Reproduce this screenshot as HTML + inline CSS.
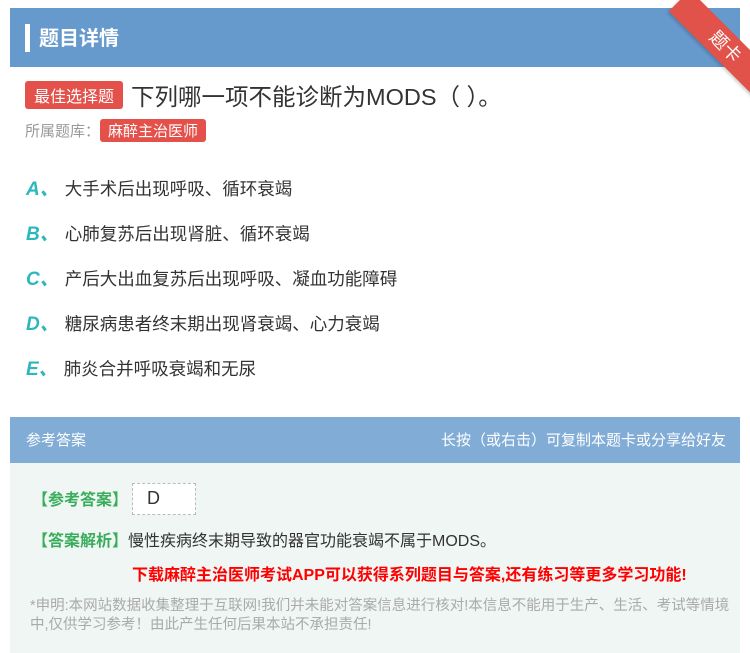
<!DOCTYPE html>
<html><head><meta charset="utf-8"><style>
*{margin:0;padding:0;box-sizing:border-box}
body{width:750px;height:653px;background:#fff;font-family:"Liberation Sans","Noto Sans CJK SC",sans-serif;position:relative;overflow:hidden;color:#333}
.hd{position:absolute;left:10px;top:8px;width:730px;height:59px;background:#6699cc}
.hd .bar{position:absolute;left:15px;top:16px;width:5px;height:28px;background:#fff}
.hd .t{position:absolute;left:29px;top:14px;color:#fff;font-size:20px;font-weight:bold}
.rib{position:absolute;width:130px;height:30px;background:#e0524a;transform:rotate(45deg);transform-origin:0 0;left:690px;top:-10px;color:#fff;font-size:18px;text-align:center;line-height:30px;box-shadow:0 2px 3px rgba(0,0,0,.2)}
.tag{display:inline-block;background:#e4504a;color:#fff;border-radius:3px}
.q{position:absolute;left:25px;top:78px;font-size:23.5px;color:#333;white-space:nowrap}
.q .tag{font-size:16px;padding:2px 9px;margin-right:8px;vertical-align:3px}
.lib{position:absolute;left:25px;top:119px;font-size:15px;color:#999}
.lib .tag{font-size:15px;padding:1px 8px}
.opt{position:absolute;left:26px;font-size:17.5px;color:#333}
.opt b{color:#2cb7bd;font-style:italic;font-size:19px;margin-right:6px;font-weight:bold}
.ah{position:absolute;left:10px;top:417px;width:730px;height:46px;background:#80acd6;color:#fff;font-size:15px}
.ab{position:absolute;left:10px;top:463px;width:730px;height:190px;background:#eff6f4}
.g{color:#3aad5c;font-weight:bold;font-size:16px}
</style></head><body>
<div class="hd"><div class="bar"></div><div class="t">题目详情</div></div>
<div class="rib">题卡</div>
<div class="q"><span class="tag">最佳选择题</span>下列哪一项不能诊断为MODS（ ）。</div>
<div class="lib">所属题库：<span class="tag">麻醉主治医师</span></div>
<div class="opt" style="top:174px"><b>A、</b>大手术后出现呼吸、循环衰竭</div>
<div class="opt" style="top:219px"><b>B、</b>心肺复苏后出现肾脏、循环衰竭</div>
<div class="opt" style="top:264px"><b>C、</b>产后大出血复苏后出现呼吸、凝血功能障碍</div>
<div class="opt" style="top:309px"><b>D、</b>糖尿病患者终末期出现肾衰竭、心力衰竭</div>
<div class="opt" style="top:354px"><b>E、</b>肺炎合并呼吸衰竭和无尿</div>
<div class="ah"><span style="position:absolute;left:16px;top:12px">参考答案</span><span style="position:absolute;right:14px;top:12px">长按（或右击）可复制本题卡或分享给好友</span></div>
<div class="ab">
<div style="position:absolute;left:22px;top:23px"><span class="g">【参考答案】</span></div>
<div style="position:absolute;left:122px;top:20px;width:64px;height:32px;background:#fff;border:1px dashed #bbb;font-size:18px;padding:4px 0 0 14px">D</div>
<div style="position:absolute;left:22px;top:64px;font-size:16px"><span class="g">【答案解析】</span>慢性疾病终末期导致的器官功能衰竭不属于MODS。</div>
<div style="position:absolute;left:122px;top:98px;font-size:16px;color:#f00;font-weight:bold;white-space:nowrap">下载麻醉主治医师考试APP可以获得系列题目与答案,还有练习等更多学习功能!</div>
<div style="position:absolute;left:20px;top:134px;width:700px;font-size:14.5px;color:#aaa;line-height:19px">*申明:本网站数据收集整理于互联网!我们并未能对答案信息进行核对!本信息不能用于生产、生活、考试等情境中,仅供学习参考！由此产生任何后果本站不承担责任!</div>
</div>
</body></html>
